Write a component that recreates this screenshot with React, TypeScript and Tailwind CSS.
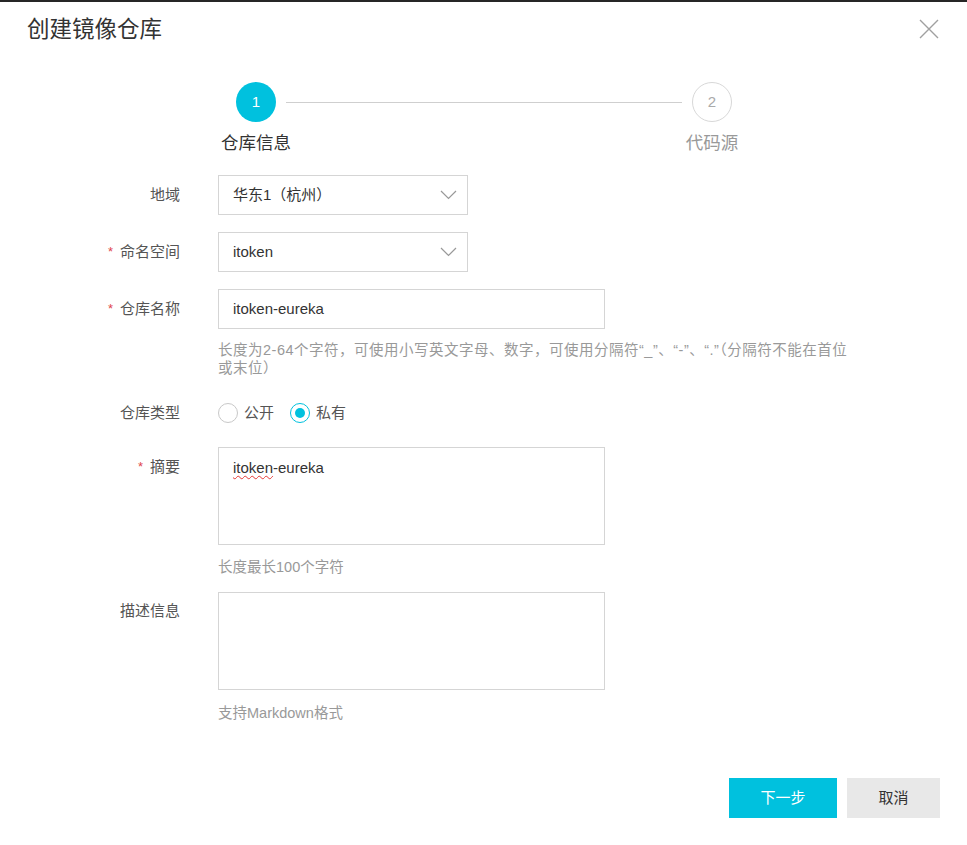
import { ReactNode } from "react";

const font = {
    fontFamily: '"Liberation Sans", "Noto Sans CJK SC", sans-serif',
};

function Chevron() {
    return (
        <svg width="17" height="10" viewBox="0 0 17 10" fill="none">
            <path d="M1 1l7.5 7.5L16 1" stroke="#999" strokeWidth="1.2" />
        </svg>
    );
}

function Label({ children, required }: { children: ReactNode; required?: boolean }) {
    return (
        <div className="flex w-[180px] shrink-0 items-center justify-end text-[15px] text-[#555]">
            {required && <span className="mr-[7px] text-[13px] text-[#e0464d]">*</span>}
            {children}
        </div>
    );
}

function SelectBox({ value }: { value: string }) {
    return (
        <div className="flex h-[40px] w-[250px] items-center justify-between border border-[#d5d5d5] bg-white pr-[10px] pl-[14px] text-[15px] text-[#333]">
            <span>{value}</span>
            <Chevron />
        </div>
    );
}

function Radio({ checked, label }: { checked?: boolean; label: string }) {
    return (
        <div className="flex items-center gap-[6px]">
            <span
                className={`flex h-[20px] w-[20px] items-center justify-center rounded-full border bg-white ${
                    checked ? "border-[#00c1de]" : "border-[#c8c8c8]"
                }`}
            >
                {checked && <span className="h-[10px] w-[10px] rounded-full bg-[#00c1de]" />}
            </span>
            <span className="text-[15px] text-[#555]">{label}</span>
        </div>
    );
}

export default function App() {
    return (
        <div className="relative h-[845px] w-[967px] overflow-hidden bg-white" style={font}>
            <div className="h-[2px] bg-[#262626]" />

            {/* Header */}
            <div className="flex items-center justify-between pt-[13px] pr-[28px] pl-[27px]">
                <h1 className="text-[22.5px] leading-[30px] text-[#333]">创建镜像仓库</h1>
                <svg width="20" height="20" viewBox="0 0 20 20" className="mt-[-2px]">
                    <path d="M1 1l18 18M19 1L1 19" stroke="#a0a0a0" strokeWidth="1.4" />
                </svg>
            </div>

            {/* Steps */}
            <div className="mt-[37px] ml-[236px] flex items-center">
                <div className="flex h-[40px] w-[40px] items-center justify-center rounded-full bg-[#00c1de] text-[15px] text-white">
                    1
                </div>
                <div className="mx-[10px] h-px w-[396px] bg-[#cfcfcf]" />
                <div className="flex h-[40px] w-[40px] items-center justify-center rounded-full border border-[#d8d8d8] text-[15px] text-[#aaa]">
                    2
                </div>
            </div>
            <div className="mt-[9px] ml-[196px] flex w-[576px] justify-between text-[17.5px] leading-[24px]">
                <span className="w-[120px] text-center text-[#333]">仓库信息</span>
                <span className="w-[120px] text-center text-[#999]">代码源</span>
            </div>

            {/* Form */}
            <div className="mt-[20px] flex flex-col">
                <div className="flex">
                    <Label>地域</Label>
                    <div className="ml-[38px]">
                        <SelectBox value="华东1（杭州）" />
                    </div>
                </div>

                <div className="mt-[17px] flex">
                    <Label required>命名空间</Label>
                    <div className="ml-[38px]">
                        <SelectBox value="itoken" />
                    </div>
                </div>

                <div className="mt-[17px] flex">
                    <Label required>仓库名称</Label>
                    <div className="ml-[38px]">
                        <div className="flex h-[40px] w-[387px] items-center border border-[#d5d5d5] pl-[14px] text-[15px] text-[#333]">
                            itoken-eureka
                        </div>
                    </div>
                </div>
                <div className="mt-[12px] ml-[218px] w-[700px] text-[14.5px] leading-[18px] tracking-[0.5px] text-[#999]">
                    长度为2-64个字符，可使用小写英文字母、数字，可使用分隔符“_”、“-”、“.”（分隔符不能在首位
                    <br />
                    或末位）
                </div>

                <div className="mt-[26px] flex h-[20px]">
                    <Label>仓库类型</Label>
                    <div className="ml-[38px] flex items-center gap-[16px]">
                        <Radio label="公开" />
                        <Radio checked label="私有" />
                    </div>
                </div>

                <div className="mt-[24px] flex">
                    <div className="flex w-[180px] shrink-0 justify-end pt-[9px] text-[15px] leading-[22px] text-[#555]">
                        <span className="mr-[7px] text-[13px] text-[#e0464d]">*</span>
                        摘要
                    </div>
                    <div className="ml-[38px] h-[98px] w-[387px] border border-[#d5d5d5] pt-[9px] pl-[14px] text-[15px] leading-[22px] text-[#333]">
                        <span className="underline decoration-[#e53935] decoration-wavy decoration-1 underline-offset-2">
                            itoken
                        </span>
                        -eureka
                    </div>
                </div>
                <div className="mt-[13px] ml-[218px] text-[14.5px] leading-[18px] text-[#999]">
                    长度最长100个字符
                </div>

                <div className="mt-[16px] flex">
                    <div className="flex w-[180px] shrink-0 justify-end pt-[8px] text-[15px] leading-[22px] text-[#555]">
                        描述信息
                    </div>
                    <div className="ml-[38px] h-[98px] w-[387px] border border-[#d5d5d5]" />
                </div>
                <div className="mt-[14px] ml-[218px] text-[14.5px] leading-[18px] text-[#999]">
                    支持Markdown格式
                </div>
            </div>

            {/* Footer */}
            <div className="mt-[56px] flex justify-end gap-[10px] pr-[27px]">
                <button className="h-[40px] w-[108px] bg-[#00c1de] text-[15px] text-white">下一步</button>
                <button className="h-[40px] w-[93px] bg-[#e8e8e8] text-[15px] text-[#333]">取消</button>
            </div>
        </div>
    );
}
